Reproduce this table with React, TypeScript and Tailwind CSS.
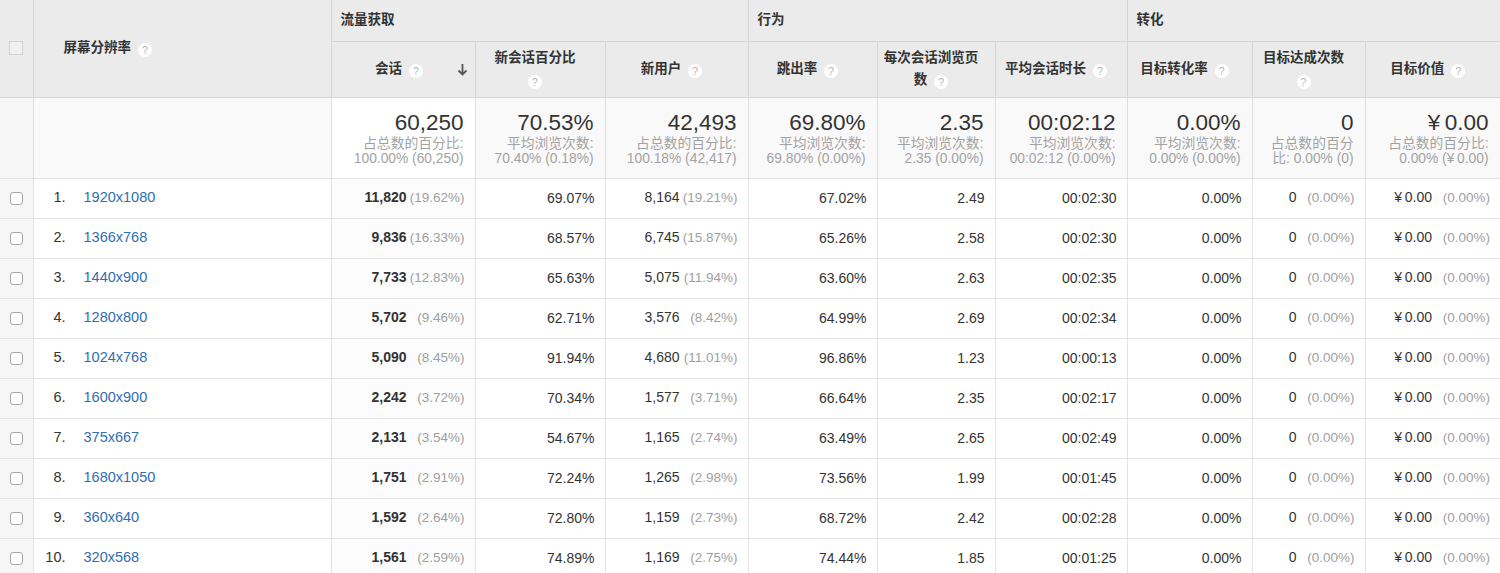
import React from 'react';

interface Row {
    dim: string;
    sessions: string;
    sessionsPct: string;
    newPct: string;
    newUsers: string;
    newUsersPct: string;
    bounce: string;
    pages: string;
    duration: string;
}

const rows: Row[] = [
    { dim: '1920x1080', sessions: '11,820', sessionsPct: '(19.62%)', newPct: '69.07%', newUsers: '8,164', newUsersPct: '(19.21%)', bounce: '67.02%', pages: '2.49', duration: '00:02:30' },
    { dim: '1366x768', sessions: '9,836', sessionsPct: '(16.33%)', newPct: '68.57%', newUsers: '6,745', newUsersPct: '(15.87%)', bounce: '65.26%', pages: '2.58', duration: '00:02:30' },
    { dim: '1440x900', sessions: '7,733', sessionsPct: '(12.83%)', newPct: '65.63%', newUsers: '5,075', newUsersPct: '(11.94%)', bounce: '63.60%', pages: '2.63', duration: '00:02:35' },
    { dim: '1280x800', sessions: '5,702', sessionsPct: '(9.46%)', newPct: '62.71%', newUsers: '3,576', newUsersPct: '(8.42%)', bounce: '64.99%', pages: '2.69', duration: '00:02:34' },
    { dim: '1024x768', sessions: '5,090', sessionsPct: '(8.45%)', newPct: '91.94%', newUsers: '4,680', newUsersPct: '(11.01%)', bounce: '96.86%', pages: '1.23', duration: '00:00:13' },
    { dim: '1600x900', sessions: '2,242', sessionsPct: '(3.72%)', newPct: '70.34%', newUsers: '1,577', newUsersPct: '(3.71%)', bounce: '66.64%', pages: '2.35', duration: '00:02:17' },
    { dim: '375x667', sessions: '2,131', sessionsPct: '(3.54%)', newPct: '54.67%', newUsers: '1,165', newUsersPct: '(2.74%)', bounce: '63.49%', pages: '2.65', duration: '00:02:49' },
    { dim: '1680x1050', sessions: '1,751', sessionsPct: '(2.91%)', newPct: '72.24%', newUsers: '1,265', newUsersPct: '(2.98%)', bounce: '73.56%', pages: '1.99', duration: '00:01:45' },
    { dim: '360x640', sessions: '1,592', sessionsPct: '(2.64%)', newPct: '72.80%', newUsers: '1,159', newUsersPct: '(2.73%)', bounce: '68.72%', pages: '2.42', duration: '00:02:28' },
    { dim: '320x568', sessions: '1,561', sessionsPct: '(2.59%)', newPct: '74.89%', newUsers: '1,169', newUsersPct: '(2.75%)', bounce: '74.44%', pages: '1.85', duration: '00:01:25' },
];

// little "?" bubble next to column titles
const Help = ({ gap = true }: { gap?: boolean }) => (
    <span className={`inline-flex items-center justify-center w-[14px] h-[14px] rounded-full bg-white text-[10.5px] leading-none font-normal text-[#b3b3b3] align-[-2px] ${gap ? 'ml-[7px]' : ''}`}>?</span>
);

const SortDown = () => (
    <svg width="11" height="13" viewBox="0 0 11 13" className="block">
        <path d="M5.5 1 V11.5 M1.5 7.5 L5.5 11.5 L9.5 7.5" fill="none" stroke="#555" strokeWidth="1.8" />
    </svg>
);

const Pct = ({ children }: { children: React.ReactNode }) => (
    <span className="inline-block w-[58px] text-right text-[13.5px] text-[#a0a0a0]">{children}</span>
);

const th = 'border border-[#d6d6d6] bg-[#ebebeb] text-[13.5px] font-bold text-[#333] align-middle';
const sub = `${th} pl-[4px] pr-[14px] text-center leading-[22px]`;
const sumCell = 'border-x border-[#dedede] bg-[#f9f9f9] text-right pr-[11px] pt-[12px] align-top';
const td = 'border border-[#e3e3e3] text-right pr-[10px] text-[14px] text-[#333]';

const Summary = ({ big, lines, white }: { big: string; lines: React.ReactNode[]; white?: boolean }) => (
    <td className={`${sumCell} ${white ? 'bg-white' : ''}`}>
        <div className="text-[22.5px] leading-[26px] text-[#333]">{big}</div>
        {lines.map((l, i) => (
            <div key={i} className="text-[13.8px] leading-[15px] text-[#a3a3a3]">{l}</div>
        ))}
    </td>
);

const App: React.FC = () => {
    return (
        <div className="w-[1500px] h-[573px] overflow-hidden bg-white font-['Liberation_Sans','Noto_Sans_CJK_SC',sans-serif]">
            <table className="w-[1500px] table-fixed border-collapse">
                <colgroup>
                    <col className="w-[33px]" />
                    <col className="w-[298px]" />
                    <col className="w-[144px]" />
                    <col className="w-[130px]" />
                    <col className="w-[143px]" />
                    <col className="w-[129px]" />
                    <col className="w-[118px]" />
                    <col className="w-[132px]" />
                    <col className="w-[125px]" />
                    <col className="w-[113px]" />
                    <col className="w-[135px]" />
                </colgroup>
                <thead>
                    <tr className="h-[41px]">
                        <th rowSpan={2} className={`${th} border-t-0 border-l-0`}>
                            <span className="block mx-auto w-[14px] h-[14px] border border-[#d0d0d0] bg-[#f1f1f1]" />
                        </th>
                        <th rowSpan={2} className={`${th} border-t-0 text-left pl-[30px]`}>
                            屏幕分辨率<Help />
                        </th>
                        <th colSpan={3} className={`${th} border-t-0 text-left pl-[9px]`}>流量获取</th>
                        <th colSpan={3} className={`${th} border-t-0 text-left pl-[9px]`}>行为</th>
                        <th colSpan={3} className={`${th} border-t-0 border-r-0 text-left pl-[9px]`}>转化</th>
                    </tr>
                    <tr className="h-[56px]">
                        <th className={th}>
                            <div className="flex items-center pl-[10px] pr-[7px]">
                                <span className="flex-1 text-center">会话<Help /></span>
                                <SortDown />
                            </div>
                        </th>
                        <th className={sub}>新会话百分比<br /><Help gap={false} /></th>
                        <th className={sub}>新用户<Help /></th>
                        <th className={sub}>跳出率<Help /></th>
                        <th className={`${sub} pr-[8px]`}>每次会话浏览页<br />数<Help /></th>
                        <th className={sub}>平均会话时长<Help /></th>
                        <th className={sub}>目标转化率<Help /></th>
                        <th className={sub}>目标达成次数<br /><Help gap={false} /></th>
                        <th className={`${sub} border-r-0`}>目标价值<Help /></th>
                    </tr>
                </thead>
                <tbody>
                    <tr className="h-[81px] border-b border-[#e3e3e3]">
                        <td className="bg-[#f6f6f6] border-r border-[#dedede]" />
                        <td className="bg-[#f9f9f9] border-r border-[#dedede]" />
                        <Summary big="60,250" lines={['占总数的百分比:', '100.00% (60,250)']} white />
                        <Summary big="70.53%" lines={['平均浏览次数:', '70.40% (0.18%)']} />
                        <Summary big="42,493" lines={['占总数的百分比:', '100.18% (42,417)']} />
                        <Summary big="69.80%" lines={['平均浏览次数:', '69.80% (0.00%)']} />
                        <Summary big="2.35" lines={['平均浏览次数:', '2.35 (0.00%)']} />
                        <Summary big="00:02:12" lines={['平均浏览次数:', '00:02:12 (0.00%)']} />
                        <Summary big="0.00%" lines={['平均浏览次数:', '0.00% (0.00%)']} />
                        <Summary big="0" lines={['占总数的百分', '比: 0.00% (0)']} />
                        <Summary big={'¥\u20090.00'} lines={['占总数的百分比:', '0.00% (¥\u20090.00)']} />
                    </tr>
                    {rows.map((r, i) => (
                        <tr key={r.dim} className="h-[40px]">
                            <td className="border border-l-0 border-[#e3e3e3] bg-[#f6f6f6]">
                                <span className="block mx-auto w-[13px] h-[13px] rounded-[3px] border border-[#a8a8a8] bg-white" />
                            </td>
                            <td className="border border-[#e3e3e3] text-[14.5px]">
                                <div className="flex items-center pl-[10px]">
                                    <span className="w-[22px] text-right text-[#333]">{i + 1}.</span>
                                    <span className="ml-[18px] text-[#2f6fb0]">{r.dim}</span>
                                </div>
                            </td>
                            <td className={`${td} bg-[#fcfcfc]`}>
                                <span className="font-bold">{r.sessions}</span><Pct>{r.sessionsPct}</Pct>
                            </td>
                            <td className={td}>{r.newPct}</td>
                            <td className={td}>
                                {r.newUsers}<Pct>{r.newUsersPct}</Pct>
                            </td>
                            <td className={td}>{r.bounce}</td>
                            <td className={td}>{r.pages}</td>
                            <td className={td}>{r.duration}</td>
                            <td className={td}>0.00%</td>
                            <td className={td}>
                                0<Pct>(0.00%)</Pct>
                            </td>
                            <td className={`${td} border-r-0`}>
                                {'¥\u20090.00'}<Pct>(0.00%)</Pct>
                            </td>
                        </tr>
                    ))}
                </tbody>
            </table>
        </div>
    );
};

export default App;
